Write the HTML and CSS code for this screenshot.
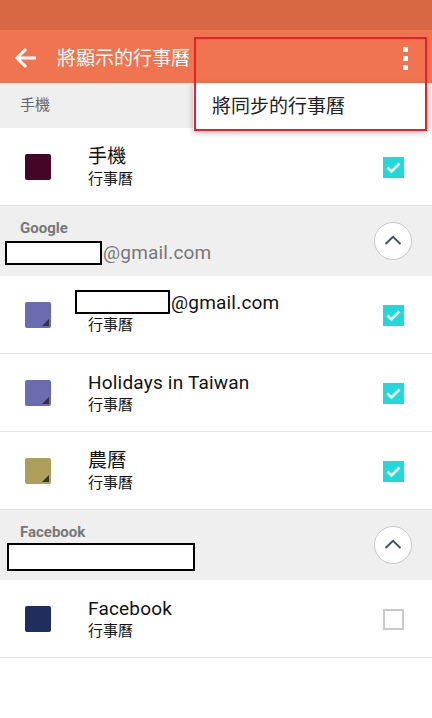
FILE: index.html
```html
<!DOCTYPE html>
<html lang="zh-Hant">
<head>
    <meta charset="UTF-8">
    <meta name="viewport" content="width=device-width, initial-scale=1.0">
    <title>將顯示的行事曆</title>
    <link rel="stylesheet" href="styles.css">
</head>
<body>
    <div class="status-bar"></div>
    <div class="app-bar">
        <svg class="back" width="24" height="24" viewBox="0 0 24 24">
            <path d="M22 12H4M12 3L3 12l9 9" fill="none" stroke="#fff" stroke-width="3"/>
        </svg>
        <h1 class="title">將顯示的行事曆</h1>
        <div class="more">
            <span></span><span></span><span></span>
        </div>
    </div>

    <div class="menu">將同步的行事曆</div>
    <div class="highlight"></div>

    <div class="section-head">手機</div>
    <div class="row">
        <div class="swatch" style="background-color: #450525;"></div>
        <div class="text">
            <div class="name">手機</div>
            <div class="sub">行事曆</div>
        </div>
        <div class="check on"></div>
    </div>

    <div class="group-head">
        <div class="group-text">
            <div class="group-name">Google</div>
            <div class="group-account"><span class="hidden" style="width: 93px;"></span>@gmail.com</div>
        </div>
        <div class="collapse">
            <svg width="18" height="10" viewBox="0 0 18 10"><path d="M1.5 9L9 1.8 16.5 9" fill="none" stroke="#48525c" stroke-width="2"/></svg>
        </div>
    </div>
    <div class="row">
        <div class="swatch corner" style="background-color: #6b6bb1;"></div>
        <div class="text">
            <div class="name shift"><span class="hidden" style="width: 91px;"></span>@gmail.com</div>
            <div class="sub">行事曆</div>
        </div>
        <div class="check on"></div>
    </div>
    <div class="row">
        <div class="swatch corner" style="background-color: #6b6bb1;"></div>
        <div class="text">
            <div class="name">Holidays in Taiwan</div>
            <div class="sub">行事曆</div>
        </div>
        <div class="check on"></div>
    </div>
    <div class="row">
        <div class="swatch corner" style="background-color: #ab9f5b;"></div>
        <div class="text">
            <div class="name">農曆</div>
            <div class="sub">行事曆</div>
        </div>
        <div class="check on"></div>
    </div>

    <div class="group-head">
        <div class="group-text">
            <div class="group-name">Facebook</div>
            <div class="group-account fb"><span class="hidden tall" style="width: 184px;"></span></div>
        </div>
        <div class="collapse">
            <svg width="18" height="10" viewBox="0 0 18 10"><path d="M1.5 9L9 1.8 16.5 9" fill="none" stroke="#48525c" stroke-width="2"/></svg>
        </div>
    </div>
    <div class="row">
        <div class="swatch" style="background-color: #1f2e5d;"></div>
        <div class="text">
            <div class="name">Facebook</div>
            <div class="sub">行事曆</div>
        </div>
        <div class="check"></div>
    </div>
</body>
</html>
```

FILE: styles.css
```css
body {
    margin: 0;
    background-color: #fff;
    font-family: Roboto, "Noto Sans CJK TC", sans-serif;
    color: #111;
    overflow: hidden;
}

.status-bar {
    height: 30px;
    background-color: #d66843;
}

.app-bar {
    height: 53px;
    background-color: #f07450;
    display: flex;
    align-items: center;
}

.back {
    margin-left: 14px;
    margin-top: 2px;
}

.title {
    margin: 0 0 0 19px;
    font-size: 19px;
    font-weight: normal;
    color: #fff;
    flex: 1;
}

.more {
    display: flex;
    flex-direction: column;
    gap: 4px;
    margin-right: 24px;
    margin-top: 3px;
}

.more span {
    width: 5px;
    height: 5px;
    background-color: #fff;
}

.menu {
    position: absolute;
    top: 83px;
    left: 193px;
    width: 215px;
    height: 48px;
    padding-left: 19px;
    line-height: 48px;
    font-size: 19px;
    color: #222;
    background-color: #fff;
    box-shadow: 0 2px 6px rgba(0, 0, 0, 0.25);
    z-index: 2;
}

.highlight {
    position: absolute;
    top: 37px;
    left: 194px;
    width: 229px;
    height: 90px;
    border: 2px solid #e8202b;
    z-index: 3;
}

.section-head {
    height: 45px;
    line-height: 44px;
    padding-left: 20px;
    background-color: #efefef;
    color: #666;
    font-size: 15px;
}

.row {
    height: 77px;
    display: flex;
    align-items: center;
    border-bottom: 1px solid #e6e6e6;
}

.swatch {
    position: relative;
    width: 26px;
    height: 26px;
    border-radius: 2px;
    margin-left: 25px;
    margin-right: 37px;
    flex-shrink: 0;
}

.swatch.corner::after {
    content: "";
    position: absolute;
    right: 2px;
    bottom: 2px;
    border-style: solid;
    border-width: 0 0 7px 7px;
    border-color: transparent transparent #333 transparent;
}

.text {
    flex: 1;
    margin-top: 1px;
}

.name {
    font-size: 19px;
    letter-spacing: 0.2px;
    line-height: 23px;
    display: flex;
    align-items: center;
}

.name.shift {
    margin-left: -13px;
    margin-top: -4px;
}

.sub {
    font-size: 15px;
    line-height: 22px;
}

.hidden {
    display: inline-block;
    height: 20px;
    border: 2px solid #000;
    background-color: #fff;
    margin-right: 1px;
}

.hidden.tall {
    height: 24px;
}

.check {
    width: 17px;
    height: 17px;
    border: 2px solid #c9c9c9;
    margin-right: 28px;
    margin-top: 2px;
}

.check.on {
    width: 21px;
    height: 21px;
    border: none;
    background-color: #1fdada;
    background-image: url("data:image/svg+xml;utf8,<svg xmlns='http://www.w3.org/2000/svg' width='21' height='21'><path d='M4.5 10.5l4 4 8-8' fill='none' stroke='white' stroke-width='2.6'/></svg>");
}

.group-head {
    height: 70px;
    background-color: #efefef;
    display: flex;
    align-items: center;
}

.group-text {
    flex: 1;
    margin-top: 3px;
}

.group-name {
    padding-left: 20px;
    font-size: 15px;
    font-weight: bold;
    color: #777;
    line-height: 18px;
    margin-bottom: 2px;
}

.group-account {
    display: flex;
    align-items: center;
    padding-left: 5px;
    font-size: 19px;
    letter-spacing: 0.2px;
    color: #777;
    line-height: 28px;
}

.group-account.fb {
    padding-left: 7px;
}

.collapse {
    width: 36px;
    height: 36px;
    border: 1px solid #c8c8c8;
    border-radius: 50%;
    background-color: #fff;
    display: flex;
    align-items: center;
    justify-content: center;
    margin-right: 20px;
}

.collapse svg {
    margin-top: -2px;
}
```
